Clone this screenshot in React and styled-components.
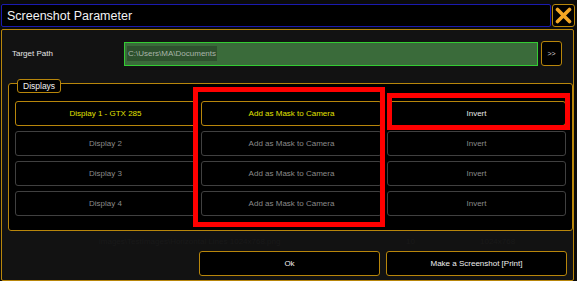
import React from "react";
import styled, { createGlobalStyle } from "styled-components";

const Global = createGlobalStyle`
  html, body { margin: 0; padding: 0; background: #0b0b0b; }
  body { font-family: "Liberation Sans", Arial, sans-serif; }
  * { box-sizing: border-box; }
`;

const Screen = styled.div`
  position: relative;
  width: 577px;
  height: 281px;
  overflow: hidden;
  background: #0b0b0b;
  padding: 4px 2px 0 1px;
  display: flex;
  flex-direction: column;
`;

const TitleRow = styled.div`
  display: flex;
  gap: 1px;
  height: 23px;
`;

const TitleBar = styled.div`
  width: 550px;
  border: 1px solid #1a1ab0;
  border-radius: 2px;
  background: #000;
  color: #f2f2f2;
  font-size: 12.5px;
  display: flex;
  align-items: center;
  padding-left: 5px;
`;

const CloseButton = styled.button`
  width: 23px;
  height: 23px;
  padding: 0;
  border: 1px solid #b8860b;
  border-radius: 3px;
  background: #000;
  display: flex;
  align-items: center;
  justify-content: center;
`;

const Panel = styled.div`
  margin-top: 2px;
  width: 573px;
  height: 252px;
  border: 1px solid #b8860b;
  border-radius: 2px;
  background: #121212;
  display: flex;
  flex-direction: column;
  padding: 11px 0 0 6px;
`;

const PathRow = styled.div`
  display: flex;
  align-items: center;
  height: 25px;
`;

const Label = styled.div`
  width: 116px;
  padding-left: 4px;
  color: #e6e6e6;
  font-size: 8px;
`;

const PathInput = styled.div`
  width: 414px;
  height: 24px;
  border: 1px solid #33cc33;
  background: #3a6b3a;
  display: flex;
  align-items: center;
  padding-left: 2px;
`;

const Selected = styled.span`
  background: #2e512e;
  color: #a9b5a9;
  font-size: 8px;
  padding: 3px 1px;
`;

const MoreButton = styled.button`
  margin-left: 3px;
  width: 21px;
  height: 25px;
  padding: 0;
  border: 1px solid #b8860b;
  border-radius: 3px;
  background: #000;
  color: #cfcfcf;
  font-size: 7px;
  font-family: inherit;
`;

const Group = styled.div`
  position: relative;
  margin-top: 17px;
  width: 565px;
  height: 148px;
  border: 1px solid #b8860b;
  border-radius: 3px;
  background: #000;
  padding: 17px 6px 0 6px;
`;

const Legend = styled.div`
  position: absolute;
  top: -5px;
  left: 8px;
  height: 14px;
  padding: 0 5px;
  border: 1px solid #b8860b;
  border-radius: 3px;
  background: #000;
  color: #f0f0f0;
  font-size: 8.5px;
  display: flex;
  align-items: center;
`;

const Grid = styled.div`
  display: grid;
  grid-template-columns: 181px 181px 179px;
  grid-auto-rows: 25px;
  column-gap: 5px;
  row-gap: 5px;
`;

const Cell = styled.button`
  padding: 0;
  border: 1px solid ${(p) => (p.$active ? "#b8860b" : "#404040")};
  border-radius: 3px;
  background: #000;
  color: ${(p) => p.$color};
  font-family: inherit;
  font-size: 8px;
`;

const Ghost = styled.div`
  height: 20px;
  display: flex;
  align-items: center;
  color: #191919;
  font-size: 8px;
  padding-left: 91px;
`;

const GhostCell = styled.span`
  width: ${(p) => p.$w}px;
`;

const Footer = styled.div`
  display: flex;
  gap: 6px;
  padding-left: 191px;
`;

const ActionButton = styled.button`
  width: 181px;
  height: 25px;
  padding: 0;
  border: 1px solid #b8860b;
  border-radius: 3px;
  background: #000;
  color: #efefef;
  font-family: inherit;
  font-size: 8px;
`;

const Highlight = styled.div`
  position: absolute;
  border: 5px solid #ff0000;
  pointer-events: none;
`;

const rows = ["Display 1 - GTX 285", "Display 2", "Display 3", "Display 4"];

export default function App() {
  return (
    <>
      <Global />
      <Screen>
        <TitleRow>
          <TitleBar>Screenshot Parameter</TitleBar>
          <CloseButton aria-label="close">
            <svg width="17" height="17" viewBox="0 0 17 17">
              <path d="M2.5 2.5 L14.5 14.5 M14.5 2.5 L2.5 14.5" stroke="#f5a623" strokeWidth="3.6" strokeLinecap="round" />
            </svg>
          </CloseButton>
        </TitleRow>
        <Panel>
          <PathRow>
            <Label>Target Path</Label>
            <PathInput>
              <Selected>C:\Users\MA\Documents</Selected>
            </PathInput>
            <MoreButton>&gt;&gt;</MoreButton>
          </PathRow>
          <Group>
            <Legend>Displays</Legend>
            <Grid>
              {rows.map((r, i) => (
                <React.Fragment key={r}>
                  <Cell $active={i === 0} $color={i === 0 ? "#e0e000" : "#8a8a8a"}>{r}</Cell>
                  <Cell $active={i === 0} $color={i === 0 ? "#e0e000" : "#8a8a8a"}>Add as Mask to Camera</Cell>
                  <Cell $active={i === 0} $color={i === 0 ? "#e8e8e8" : "#8a8a8a"}>Invert</Cell>
                </React.Fragment>
              ))}
            </Grid>
          </Group>
          <Ghost>
            <GhostCell $w={307}>images\TestImages\Horizontal Lines 1024x768.png</GhostCell>
            <GhostCell $w={74}>10</GhostCell>
            <GhostCell $w={80}>1024x768</GhostCell>
          </Ghost>
          <Footer>
            <ActionButton>Ok</ActionButton>
            <ActionButton>Make a Screenshot [Print]</ActionButton>
          </Footer>
        </Panel>
        <Highlight style={{ left: 193, top: 87, width: 192, height: 140 }} />
        <Highlight style={{ left: 387, top: 93, width: 183, height: 37 }} />
      </Screen>
    </>
  );
}
